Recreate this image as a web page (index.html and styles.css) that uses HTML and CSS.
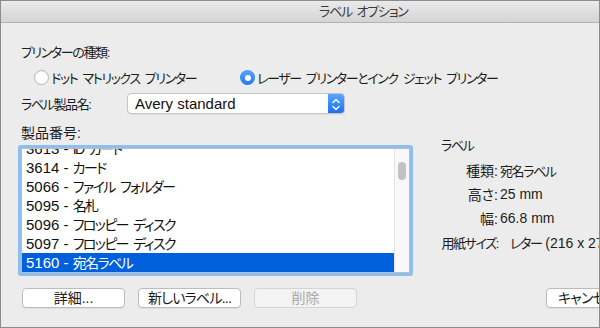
FILE: index.html
```html
<!DOCTYPE html>
<html lang="ja">
<head>
<meta charset="utf-8">
<title>ラベル オプション</title>
<link rel="stylesheet" href="styles.css">
</head>
<body>
<div class="window">
  <div class="titlebar"><span class="title">ラベル オプション</span></div>
  <div class="content">
    <div class="label-line ja">プリンターの種類:</div>
    <div class="radio-row">
      <div class="radio-item first"><span class="radio"></span><span class="radio-text ja">ドット マトリックス プリンター</span></div>
      <div class="radio-item"><span class="radio checked"></span><span class="radio-text ja">レーザー プリンターとインク ジェット プリンター</span></div>
    </div>
    <div class="select-row">
      <span class="select-label ja">ラベル製品名:</span>
      <div class="select">
        <span class="select-text">Avery standard</span>
        <span class="select-arrow">
          <svg width="16" height="21" viewBox="0 0 16 21"><path d="M5 8.5 L8 5.5 L11 8.5 M5 12.5 L8 15.5 L11 12.5" fill="none" stroke="#fff" stroke-width="1.4" stroke-linecap="round" stroke-linejoin="round"/></svg>
        </span>
      </div>
    </div>
    <div class="main-row">
      <div class="list-col">
        <div class="label-line">製品番号:</div>
        <div class="listbox">
          <div class="list-items">
            <div class="item">3613 - <span class="jl">ID カード</span></div>
            <div class="item">3614 - <span class="jl">カード</span></div>
            <div class="item">5066 - <span class="jl">ファイル フォルダー</span></div>
            <div class="item">5095 - <span class="jl">名札</span></div>
            <div class="item">5096 - <span class="jl">フロッピー ディスク</span></div>
            <div class="item">5097 - <span class="jl">フロッピー ディスク</span></div>
            <div class="item selected">5160 - <span class="jl">宛名ラベル</span></div>
          </div>
          <div class="scrollbar"><div class="thumb"></div></div>
        </div>
      </div>
      <div class="info">
        <div class="info-head ja">ラベル</div>
        <div class="info-grid">
          <span class="k">種類:</span><span class="v ja">宛名ラベル</span>
          <span class="k">高さ:</span><span class="v">25 mm</span>
          <span class="k">幅:</span><span class="v">66.8 mm</span>
          <span class="k ja">用紙サイズ:</span><span class="v paper"><span class="ja">レター</span> (216 x 279 mm)</span>
        </div>
      </div>
    </div>
    <div class="button-row">
      <button class="btn">詳細...</button>
      <button class="btn tight">新しいラベル...</button>
      <button class="btn disabled">削除</button>
      <button class="btn cancel tight">キャンセル</button>
    </div>
  </div>
</div>
</body>
</html>
```
FILE: styles.css
```css
* { box-sizing: border-box; }
html, body { margin: 0; padding: 0; }
body {
  font-family: "Liberation Sans", "Noto Sans CJK JP", sans-serif;
  font-feature-settings: "palt";
  font-size: 14px;
  color: #1c1c1c;
  background: #ececec;
}
.ja {
  font-size: 13px;
  letter-spacing: -1.4px;
  word-spacing: 3px;
}
.window {
  width: 600px;
  height: 328px;
  border: 1px solid #8c8c8c;
  background: #ececec;
  overflow: hidden;
}
.titlebar {
  height: 22px;
  border-bottom: 1px solid #b3b3b3;
  background: linear-gradient(#ebeaeb, #d5d4d5);
  display: flex;
  align-items: center;
  padding-left: 318px;
}
.title {
  font-size: 13px;
  letter-spacing: -1.2px;
  word-spacing: 2px;
  color: #3a3a3a;
  line-height: 16px;
}
.content {
  padding: 21px 0 0 20px;
}
.label-line {
  line-height: 18px;
  height: 18px;
}
.radio-row {
  display: flex;
  margin-top: 7px;
  padding-left: 13px;
  height: 17px;
}
.radio-item {
  display: flex;
  align-items: center;
  gap: 2px;
  white-space: nowrap;
}
.radio-item.first { width: 206px; }
.radio {
  width: 15px;
  height: 15px;
  border-radius: 50%;
  background: #fff;
  border: 1px solid #b4b4b4;
  box-shadow: inset 0 1px 1px rgba(0,0,0,0.06);
  display: flex;
  align-items: center;
  justify-content: center;
  flex: none;
}
.radio.checked {
  border: none;
  background: linear-gradient(#5aa6fb, #2079f1);
}
.radio.checked::after {
  content: "";
  width: 6px;
  height: 6px;
  border-radius: 50%;
  background: #fff;
}
.select-row {
  display: flex;
  align-items: center;
  margin-top: 7px;
  height: 21px;
}
.select-label { width: 106px; flex: none; }
.select {
  width: 218px;
  height: 21px;
  display: flex;
  background: #fff;
  border: 1px solid #c4c4c4;
  border-radius: 4px;
  box-shadow: 0 1px 1px rgba(0,0,0,0.05);
  overflow: hidden;
}
.select-text {
  flex: 1;
  font-size: 15px;
  line-height: 19px;
  padding-left: 7px;
  color: #111;
}
.select-arrow {
  width: 16px;
  display: flex;
  background: linear-gradient(#5aa8fd, #1c6ff0);
}
.main-row {
  display: flex;
  margin-top: 10px;
}
.list-col { width: 389px; flex: none; }
.listbox {
  margin-top: 6px;
  height: 125px;
  border: 1px solid #bdbdbd;
  box-shadow: 0 0 0 3px #8dbdf1;
  border-radius: 1px;
  background: #fff;
  display: flex;
}
.list-items {
  flex: 1;
  overflow: hidden;
}
.item {
  height: 19px;
  line-height: 19px;
  font-size: 15px;
  padding-left: 4px;
  white-space: nowrap;
  color: #111;
}
.jl {
  font-size: 14px;
  letter-spacing: -1.6px;
  word-spacing: 3px;
}
.item:first-child { margin-top: -10px; }
.item.selected {
  background: #0060dc;
  color: #fff;
}
.scrollbar {
  width: 15px;
  flex: none;
  background: #f8f8f8;
  border-left: 1px solid #e4e4e4;
  padding: 13px 0 0 3px;
}
.thumb {
  width: 8px;
  height: 18px;
  border-radius: 4px;
  background: #c2c2c2;
}
.info {
  padding-top: 10px;
  flex: none;
  width: 200px;
}
.info-head {
  line-height: 24px;
  padding-left: 31px;
}
.info-grid {
  display: grid;
  grid-template-columns: 88px auto;
  grid-auto-rows: 24px;
  align-items: center;
  white-space: nowrap;
}
.k { text-align: right; }
.v { padding-left: 2px; }
.v.paper { padding-left: 12px; }
.button-row {
  display: flex;
  gap: 13px;
  margin-top: 15px;
  padding-left: 1px;
  white-space: nowrap;
}
.btn {
  width: 103px;
  height: 20px;
  flex: none;
  padding: 0;
  font-family: inherit;
  font-feature-settings: "palt";
  font-size: 14px;
  color: #1a1a1a;
  background: #fff;
  border: 1px solid #bcbcbc;
  border-radius: 4px;
  box-shadow: 0 1px 1px rgba(0,0,0,0.06);
  line-height: 18px;
}
.btn.tight { letter-spacing: -0.8px; }
.btn.disabled {
  background: #f3f3f3;
  border-color: #d4d4d4;
  color: #a9a9a9;
  box-shadow: none;
}
.btn.cancel {
  margin-left: 176px;
  width: 90px;
  text-align: left;
  padding-left: 11px;
}
```
